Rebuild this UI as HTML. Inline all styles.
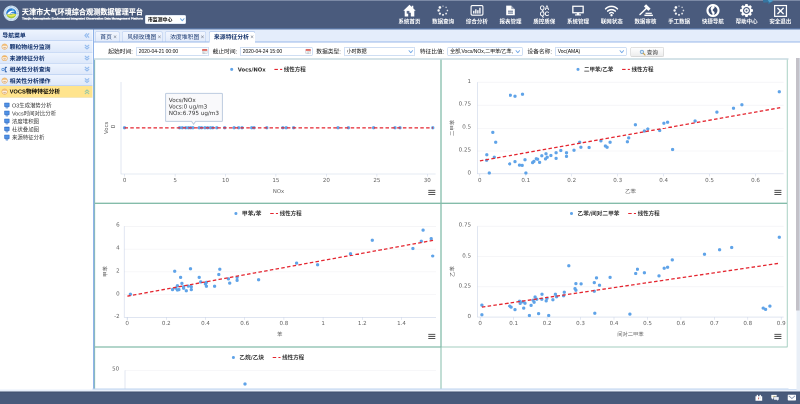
<!DOCTYPE html><html lang="zh-CN"><head><meta charset="utf-8"><title>天津市大气环境综合观测数据管理平台</title><style>
*{box-sizing:border-box;margin:0;padding:0}
html,body{width:800px;height:404px;overflow:hidden;background:#fff}
body{font-family:"Liberation Sans","Noto Sans CJK SC",sans-serif;}
#w{position:absolute;left:0;top:0;width:1600px;height:808px;transform:scale(.5);transform-origin:0 0;overflow:hidden;background:#fff;will-change:transform}
.a{position:absolute}
.t{position:absolute;white-space:nowrap;line-height:1}
#hd{left:0;top:0;width:1600px;height:58.8px;background:#4a5b7d;box-shadow:inset 0 2px 0 #7c8aa6, inset 0 -2.6px 0 #5d7bab}
.nl{position:absolute;top:37.2px;width:80px;margin-left:-40px;text-align:center;color:#fff;font-weight:bold;font-size:11.0px;line-height:12.0px;white-space:nowrap}
.ni{position:absolute;overflow:visible}
#sb{left:0;top:59.4px;width:185.2px;height:720.4px;background:#fff}
#sbb{left:185.7px;top:58.8px;width:3.1px;height:720.8px;background:#8fb2e8}
.ah{position:absolute;left:0;width:185.2px;height:22.6px;background:linear-gradient(#eef4fe,#dde8fa);border-bottom:1.2px solid #a9c3ee;color:#12316b;font-weight:bold;font-size:11.7px;line-height:23.0px;white-space:nowrap}
.ah.sel{background:#ffe48d;color:#000;border-bottom-color:#e8cf78}
.ah span{position:absolute;left:19.2px;top:0}
.tr{position:absolute;left:24.0px;font-size:10.8px;line-height:16.0px;color:#333;white-space:nowrap}
#tb{left:188.4px;top:58.8px;width:1412.0px;height:25.8px;background:#e4edfb;border-bottom:2.0px solid #98b7e8}
.tab{position:absolute;top:4.2px;height:19.8px;border:1.0px solid #b3c9ee;border-bottom:none;border-radius:3.0px 3.0px 0 0;background:linear-gradient(#f2f6fe,#e2ebfa);font-size:11.7px;line-height:20.2px;color:#12316b;white-space:nowrap;padding-left:9.2px}
.tab.on{background:#fff;height:21.8px;border-color:#98b7e8;font-weight:bold}
.tab i{font-style:normal;color:#6f7787;font-size:12.4px;margin-left:2.6px;font-weight:normal}
#fb{left:188.4px;top:84.6px;width:1412.0px;height:32.4px;background:#fff}
.fl{position:absolute;top:10.4px;font-size:11.5px;line-height:16.4px;color:#111;white-space:nowrap}
.fi{position:absolute;top:9.8px;height:17.6px;border:1.0px solid #9fbde6;border-radius:2.4px;background:#fff;font-size:10.0px;line-height:15.6px;color:#050505;padding-left:4.4px;white-space:nowrap;overflow:hidden}
.pn{position:absolute;border:2.0px solid #97c8ba;background:#fff}
#ft{left:0;top:783.2px;width:1600px;height:25.2px;background:#485a7b;box-shadow:inset 0 1.8px 0 #3b4b69}
svg text{font-family:"DejaVu Sans","Noto Sans CJK SC",sans-serif;}
</style></head><body><div id="w">
<div id="hd" class="a">
<svg class="a" style="left:6.8px;top:10.6px" width="31.2" height="31.2" viewBox="0 0 31.2 31.2">
<circle cx="15.6" cy="15.6" r="15.4" fill="#eef5fb"/>
<circle cx="15.6" cy="15.6" r="13.2" fill="none" stroke="#9cc4e6" stroke-width="3.2" stroke-dasharray="1.6 1.1"/>
<circle cx="15.6" cy="15.6" r="10.2" fill="#2a7bd0"/>
<path d="M5.6 17.5 A10.2 10.2 0 0 0 25.6 17.5 C21 14.5 16 20 5.6 17.5Z" fill="#a4c93a"/>
<path d="M6.2 18.6 C12 21.5 19 15 25.2 18.8 C20 23.5 12 23.5 6.2 18.6Z" fill="#e8e85a"/>
<path d="M8.5 15.5 C12 9.5 20 9 23 13 C19 11.8 14 13.5 12 17.2 C16 13.8 20.5 14.2 24.2 16.2 C18 14.2 13 19.5 7 17.2Z" fill="#fff"/>
<circle cx="18.6" cy="9.6" r="2.1" fill="#5fc0f0"/>
</svg>
<div class="t" style="left:43.8px;top:14.6px;font-size:14.26px;line-height:18.0px;font-weight:bold;color:#fff;-webkit-text-stroke:0.35px #fff;text-shadow:0 1px 1px rgba(30,40,70,.6)">天津市大气环境综合观测数据管理平台</div>
<div class="t" id="sub" style="left:44.0px;top:33.2px;font-size:6.0px;line-height:8.0px;font-weight:bold;color:#fff;-webkit-text-stroke:0.5px #fff">Tianjin Atmospheric Environment Integrated Observation Data Management Platform</div>
<div class="a" style="left:289.6px;top:30.4px;width:82.8px;height:17.6px;background:#fff;border-radius:2.6px;border:0.8px solid #c4d4ea"><div class="t" style="left:5.2px;top:3.2px;font-size:9.8px;line-height:10.8px;color:#000;font-weight:bold">市监测中心</div><svg class="a" style="left:69.2px;top:4.8px" width="9.2" height="7.2" viewBox="0 0 9.2 7.2"><path d="M1 1.4 L4.6 5.6 L8.2 1.4" fill="none" stroke="#6aa6e0" stroke-width="1.9" stroke-linecap="round" stroke-linejoin="round"/></svg></div>
<svg class="ni" style="left:805.8px;top:7.600000000000001px" width="26" height="26" viewBox="0 0 26 26"><path d="M13 0.6 L0.6 12.4 L3.4 12.4 L3.4 24 L10.4 24 L10.4 16.4 L15.6 16.4 L15.6 24 L22.6 24 L22.6 12.4 L25.4 12.4 L20.6 7.8 L20.6 2.6 L17.6 2.6 L17.6 5 Z" fill="#fff" transform="translate(0,1)"/><rect x="7.4" y="13.8" width="5.4" height="5.6" fill="#4a5b7d" opacity=".9"/></svg>
<div class="nl" style="left:818.8px">系统首页</div>
<svg class="ni" style="left:873.24px;top:7.600000000000001px" width="26" height="26" viewBox="0 0 26 26"><circle cx="13.00" cy="4.20" r="1.25" fill="#fff" opacity="0.72"/><circle cx="19.22" cy="6.78" r="1.45" fill="#fff" opacity="0.76"/><circle cx="21.80" cy="13.00" r="1.65" fill="#fff" opacity="0.80"/><circle cx="19.22" cy="19.22" r="1.85" fill="#fff" opacity="0.84"/><circle cx="13.00" cy="21.80" r="2.05" fill="#fff" opacity="0.88"/><circle cx="6.78" cy="19.22" r="2.25" fill="#fff" opacity="0.92"/><circle cx="4.20" cy="13.00" r="2.45" fill="#fff" opacity="0.96"/><circle cx="6.78" cy="6.78" r="2.65" fill="#fff" opacity="1.00"/></svg>
<div class="nl" style="left:886.24px">数据查询</div>
<svg class="ni" style="left:940.68px;top:7.600000000000001px" width="26" height="26" viewBox="0 0 26 26"><rect x="1.2" y="3.2" width="23.6" height="19.2" rx="2.6" fill="none" stroke="#fff" stroke-width="2.2"/><rect x="5.2" y="13.6" width="2.7" height="5.6" fill="#fff"/><rect x="9.3" y="10.6" width="2.7" height="8.6" fill="#fff"/><rect x="13.4" y="12.4" width="2.7" height="6.8" fill="#fff"/><rect x="17.5" y="7.6" width="2.7" height="11.6" fill="#fff"/></svg>
<div class="nl" style="left:953.68px">综合分析</div>
<svg class="ni" style="left:1008.12px;top:7.600000000000001px" width="26" height="26" viewBox="0 0 26 26"><path d="M4.4 3.2 L14.6 3.2 L21.6 10.2 L21.6 22.6 L4.4 22.6 Z" fill="#fff"/><path d="M14.6 3.2 L14.6 10.2 L21.6 10.2 Z" fill="#4a5b7d" opacity=".55"/><rect x="8" y="13.4" width="10" height="1.9" fill="#4a5b7d"/><rect x="8" y="17.2" width="10" height="1.9" fill="#4a5b7d"/></svg>
<div class="nl" style="left:1021.12px">报表管理</div>
<svg class="ni" style="left:1075.56px;top:7.600000000000001px" width="26" height="26" viewBox="0 0 26 26"><text x="13" y="12.4" font-size="12.8" font-weight="bold" fill="#fff" text-anchor="middle" style="font-family:'Liberation Sans',sans-serif">QA</text><text x="13" y="23.6" font-size="12.8" font-weight="bold" fill="#fff" text-anchor="middle" style="font-family:'Liberation Sans',sans-serif">QC</text></svg>
<div class="nl" style="left:1088.56px">质控质保</div>
<svg class="ni" style="left:1143.0px;top:7.600000000000001px" width="26" height="26" viewBox="0 0 26 26"><path d="M1.4 3.2 L24.6 3.2 L24.6 18.8 L15.4 18.8 L15.4 20.8 L19 20.8 L19 23 L7 23 L7 20.8 L10.6 20.8 L10.6 18.8 L1.4 18.8 Z M4 5.8 L4 16.2 L22 16.2 L22 5.8 Z" fill="#fff" fill-rule="evenodd"/></svg>
<div class="nl" style="left:1156.0px">系统管理</div>
<svg class="ni" style="left:1210.44px;top:7.600000000000001px" width="26" height="26" viewBox="0 0 26 26"><path d="M1.2 9.6 A17 17 0 0 1 24.8 9.6" fill="none" stroke="#fff" stroke-width="3" stroke-linecap="round"/><path d="M5.4 14.2 A11 11 0 0 1 20.6 14.2" fill="none" stroke="#fff" stroke-width="3" stroke-linecap="round"/><path d="M9.4 18.4 A5.4 5.4 0 0 1 16.6 18.4" fill="none" stroke="#fff" stroke-width="2.8" stroke-linecap="round"/><circle cx="13" cy="22.4" r="2.3" fill="#fff"/></svg>
<div class="nl" style="left:1223.44px">联网状态</div>
<svg class="ni" style="left:1277.88px;top:7.600000000000001px" width="26" height="26" viewBox="0 0 26 26"><path d="M2 21 L15.8 7.6" stroke="#fff" stroke-width="2.9" stroke-linecap="round"/><path d="M12 2.6 L21 11.6" stroke="#fff" stroke-width="6.2" stroke-linecap="butt"/><rect x="13" y="17.4" width="12.6" height="2.5" fill="#fff"/><rect x="10.8" y="21.2" width="17" height="2.9" fill="#fff"/></svg>
<div class="nl" style="left:1290.88px">数据审核</div>
<svg class="ni" style="left:1345.32px;top:7.600000000000001px" width="26" height="26" viewBox="0 0 26 26"><circle cx="13.00" cy="4.20" r="1.25" fill="#fff" opacity="0.72"/><circle cx="19.22" cy="6.78" r="1.45" fill="#fff" opacity="0.76"/><circle cx="21.80" cy="13.00" r="1.65" fill="#fff" opacity="0.80"/><circle cx="19.22" cy="19.22" r="1.85" fill="#fff" opacity="0.84"/><circle cx="13.00" cy="21.80" r="2.05" fill="#fff" opacity="0.88"/><circle cx="6.78" cy="19.22" r="2.25" fill="#fff" opacity="0.92"/><circle cx="4.20" cy="13.00" r="2.45" fill="#fff" opacity="0.96"/><circle cx="6.78" cy="6.78" r="2.65" fill="#fff" opacity="1.00"/></svg>
<div class="nl" style="left:1358.32px">手工数据</div>
<svg class="ni" style="left:1412.76px;top:7.600000000000001px" width="26" height="26" viewBox="0 0 26 26"><circle cx="13" cy="13" r="13.1" fill="#fff"/><circle cx="13" cy="13" r="8.9" fill="#3f4f72"/><path d="M12.4 3.4 C15.6 3.2 17.4 5.4 15.6 8 C14 10.2 12 10.6 12.6 12.8 C13.2 14.8 16 14.8 16.2 17.6 C16.4 20.2 14.4 22.4 11.6 22.8 C12.6 20 11.6 18.8 10.4 17 C9.2 15.2 10.2 13.8 9 12 C7.6 10 8.6 7 10.2 5.6 Z" fill="#fff"/></svg>
<div class="nl" style="left:1425.76px">快捷导航</div>
<svg class="ni" style="left:1480.2px;top:7.600000000000001px" width="26" height="26" viewBox="0 0 26 26"><polygon points="22.74,9.99 25.91,10.78 25.91,15.22 22.74,16.01 22.02,17.76 23.70,20.56 20.56,23.70 17.76,22.02 16.01,22.74 15.22,25.91 10.78,25.91 9.99,22.74 8.24,22.02 5.44,23.70 2.30,20.56 3.98,17.76 3.26,16.01 0.09,15.22 0.09,10.78 3.26,9.99 3.98,8.24 2.30,5.44 5.44,2.30 8.24,3.98 9.99,3.26 10.78,0.09 15.22,0.09 16.01,3.26 17.76,3.98 20.56,2.30 23.70,5.44 22.02,8.24" fill="#fff"/><circle cx="13" cy="13" r="7" fill="#4a5b7d"/><circle cx="13" cy="13" r="4.7" fill="#fff"/><circle cx="13" cy="13" r="2.1" fill="#4a5b7d"/></svg>
<div class="nl" style="left:1493.2px">帮助中心</div>
<svg class="ni" style="left:1547.64px;top:7.600000000000001px" width="26" height="26" viewBox="0 0 26 26"><rect x="1.3" y="3.1" width="23.6" height="21.6" fill="none" stroke="#fff" stroke-width="2.4"/><path d="M7.9 8.7 L18.3 19.1 M18.3 8.7 L7.9 19.1" stroke="#fff" stroke-width="2.7" stroke-linecap="square"/></svg>
<div class="nl" style="left:1560.64px">安全退出</div>
<svg class="a" style="left:1525.0px;top:-2px" width="22.0" height="10.8" viewBox="0 0 22 10.8"><path d="M0 0 L13 0 L22 3.4 L12 10.8 L11.2 6.6 L2 7.6 Z" fill="#36749f"/><path d="M9 0 L13 0 L22 3.4 L14 7 Z" fill="#4f9fcd"/></svg>
</div>
<div id="sb" class="a">
<div class="ah" style="top:0"><span style="left:4.8px">导航菜单</span><svg class="a" style="left:168.4px;top:6.4px" width="11.0" height="10.0" viewBox="0 0 11 10"><path d="M5 1.4 L1.8 5 L5 8.6 M9.4 1.4 L6.2 5 L9.4 8.6" fill="none" stroke="#94bbee" stroke-width="2.3" stroke-linecap="round" stroke-linejoin="round"/></svg></div>
<div class="ah" style="top:22.8px"><svg class="a" style="left:3.4px;top:5.0px" width="12.4" height="12.4" viewBox="0 0 12 12"><circle cx="6" cy="6" r="5.3" fill="#fbeedd" stroke="#e8a95a" stroke-width="1.15"/><path d="M1.2 5 A5 5 0 0 1 10.8 5 L9 4.2 L3 4.2 Z" fill="#f0b562"/><path d="M3.6 7.4 H8.4" stroke="#b98a5e" stroke-width="1.1"/><path d="M4.4 9.3 H7.6" stroke="#d9b48e" stroke-width="0.9"/></svg><span>颗粒物组分监测</span><svg class="a" style="left:168.8px;top:6.4px" width="10.0" height="11.0" viewBox="0 0 10 11"><path d="M1.4 1.4 L5 4.6 L8.6 1.4 M1.4 5.8 L5 9 L8.6 5.8" fill="none" stroke="#94bbee" stroke-width="2.3" stroke-linecap="round" stroke-linejoin="round"/></svg></div>
<div class="ah" style="top:45.4px"><svg class="a" style="left:3.4px;top:5.0px" width="12.4" height="12.4" viewBox="0 0 12 12"><circle cx="6" cy="6" r="5.3" fill="#fbeedd" stroke="#e8a95a" stroke-width="1.15"/><path d="M1.2 5 A5 5 0 0 1 10.8 5 L9 4.2 L3 4.2 Z" fill="#f0b562"/><path d="M3.6 7.4 H8.4" stroke="#b98a5e" stroke-width="1.1"/><path d="M4.4 9.3 H7.6" stroke="#d9b48e" stroke-width="0.9"/></svg><span>来源特征分析</span><svg class="a" style="left:168.8px;top:6.4px" width="10.0" height="11.0" viewBox="0 0 10 11"><path d="M1.4 1.4 L5 4.6 L8.6 1.4 M1.4 5.8 L5 9 L8.6 5.8" fill="none" stroke="#94bbee" stroke-width="2.3" stroke-linecap="round" stroke-linejoin="round"/></svg></div>
<div class="ah" style="top:67.6px"><svg class="a" style="left:3.4px;top:5.6px" width="12.0" height="12.0" viewBox="0 0 12 12"><circle cx="3" cy="6" r="2.4" fill="#eaf3fd" stroke="#4f8ad6" stroke-width="1.5"/><path d="M11 1.6 L7.6 1.6 L7.6 10.6 L11 10.6" fill="none" stroke="#2f5fa8" stroke-width="1.8"/><path d="M5.4 6 L7.6 6" stroke="#4f8ad6" stroke-width="1.2"/></svg><span>相关性分析查询</span><svg class="a" style="left:168.8px;top:6.4px" width="10.0" height="11.0" viewBox="0 0 10 11"><path d="M1.4 1.4 L5 4.6 L8.6 1.4 M1.4 5.8 L5 9 L8.6 5.8" fill="none" stroke="#94bbee" stroke-width="2.3" stroke-linecap="round" stroke-linejoin="round"/></svg></div>
<div class="ah" style="top:90.2px"><svg class="a" style="left:3.4px;top:5.0px" width="12.4" height="12.4" viewBox="0 0 12 12"><circle cx="6" cy="6" r="5.3" fill="#fbeedd" stroke="#e8a95a" stroke-width="1.15"/><path d="M1.2 5 A5 5 0 0 1 10.8 5 L9 4.2 L3 4.2 Z" fill="#f0b562"/><path d="M3.6 7.4 H8.4" stroke="#b98a5e" stroke-width="1.1"/><path d="M4.4 9.3 H7.6" stroke="#d9b48e" stroke-width="0.9"/></svg><span>相关性分析操作</span><svg class="a" style="left:168.8px;top:6.4px" width="10.0" height="11.0" viewBox="0 0 10 11"><path d="M1.4 1.4 L5 4.6 L8.6 1.4 M1.4 5.8 L5 9 L8.6 5.8" fill="none" stroke="#94bbee" stroke-width="2.3" stroke-linecap="round" stroke-linejoin="round"/></svg></div>
<div class="ah sel" style="top:112.8px"><svg class="a" style="left:3.4px;top:5.0px" width="12.4" height="12.4" viewBox="0 0 12 12"><circle cx="6" cy="6" r="5.3" fill="#fbeedd" stroke="#e8a95a" stroke-width="1.15"/><path d="M1.2 5 A5 5 0 0 1 10.8 5 L9 4.2 L3 4.2 Z" fill="#f0b562"/><path d="M3.6 7.4 H8.4" stroke="#b98a5e" stroke-width="1.1"/><path d="M4.4 9.3 H7.6" stroke="#d9b48e" stroke-width="0.9"/></svg><span style="font-size:11.44px">VOCS物种特征分析</span><svg class="a" style="left:168.8px;top:6.0px" width="10.0" height="11.0" viewBox="0 0 10 11"><path d="M1.4 5 L5 1.8 L8.6 5 M1.4 9.4 L5 6.2 L8.6 9.4" fill="none" stroke="#9cc8a4" stroke-width="2.1" stroke-linecap="round" stroke-linejoin="round"/></svg></div>
<svg class="a" style="left:8.4px;top:145.4px" width="11.6" height="12.4" viewBox="0 0 11.6 12.4"><rect x="0.6" y="0.4" width="10.4" height="8.4" rx="0.8" fill="#2f6cc6"/><rect x="1.9" y="1.7" width="7.8" height="5.2" fill="#4f92e6"/><path d="M2.4 8.8 L9.2 8.8 L7.8 12.2 L3.8 12.2 Z" fill="#7fa9e2"/></svg>
<div class="tr" style="top:143.6px">O3生成潜势分析</div>
<svg class="a" style="left:8.4px;top:161.6px" width="11.6" height="12.4" viewBox="0 0 11.6 12.4"><rect x="0.6" y="0.4" width="10.4" height="8.4" rx="0.8" fill="#2f6cc6"/><rect x="1.9" y="1.7" width="7.8" height="5.2" fill="#4f92e6"/><path d="M2.4 8.8 L9.2 8.8 L7.8 12.2 L3.8 12.2 Z" fill="#7fa9e2"/></svg>
<div class="tr" style="top:159.8px">Vocs时间对比分析</div>
<svg class="a" style="left:8.4px;top:177.4px" width="11.6" height="12.4" viewBox="0 0 11.6 12.4"><rect x="0.6" y="0.4" width="10.4" height="8.4" rx="0.8" fill="#2f6cc6"/><rect x="1.9" y="1.7" width="7.8" height="5.2" fill="#4f92e6"/><path d="M2.4 8.8 L9.2 8.8 L7.8 12.2 L3.8 12.2 Z" fill="#7fa9e2"/></svg>
<div class="tr" style="top:175.6px">浓度堆积图</div>
<svg class="a" style="left:8.4px;top:193.6px" width="11.6" height="12.4" viewBox="0 0 11.6 12.4"><rect x="0.6" y="0.4" width="10.4" height="8.4" rx="0.8" fill="#2f6cc6"/><rect x="1.9" y="1.7" width="7.8" height="5.2" fill="#4f92e6"/><path d="M2.4 8.8 L9.2 8.8 L7.8 12.2 L3.8 12.2 Z" fill="#7fa9e2"/></svg>
<div class="tr" style="top:191.8px">柱状叠加图</div>
<svg class="a" style="left:8.4px;top:209.8px" width="11.6" height="12.4" viewBox="0 0 11.6 12.4"><rect x="0.6" y="0.4" width="10.4" height="8.4" rx="0.8" fill="#2f6cc6"/><rect x="1.9" y="1.7" width="7.8" height="5.2" fill="#4f92e6"/><path d="M2.4 8.8 L9.2 8.8 L7.8 12.2 L3.8 12.2 Z" fill="#7fa9e2"/></svg>
<div class="tr" style="top:208.0px">来源特征分析</div>
</div><div id="sbb" class="a"></div>
<div id="tb" class="a">
<div class="tab" style="left:2.0px;width:48.8px">首页<i>×</i></div>
<div class="tab" style="left:55.6px;width:81.2px">风频玫瑰图<i>×</i></div>
<div class="tab" style="left:141.6px;width:82.0px">浓度堆积图<i>×</i></div>
<div class="tab on" style="left:229.2px;width:92.4px">来源特征分析<i>×</i></div>
</div>
<div id="fb" class="a">
<div class="fl" style="left:28.0px">起始时间:</div>
<div class="fi" style="left:83.6px;width:146.4px">2020-04-21 00:00<svg class="a" style="right:2.4px;top:1.8px" width="10.8" height="11.2" viewBox="0 0 10.8 11.2"><rect x="0.5" y="1.4" width="9.8" height="9.2" rx="1" fill="#fff" stroke="#b9b9c4" stroke-width="1"/><rect x="0.5" y="1.4" width="9.8" height="3.2" fill="#e2574c"/><rect x="2.4" y="6" width="1.6" height="1.4" fill="#9aa"/><rect x="4.8" y="6" width="1.6" height="1.4" fill="#9aa"/><rect x="7.2" y="6" width="1.6" height="1.4" fill="#9aa"/><rect x="2.4" y="8.2" width="1.6" height="1.4" fill="#9aa"/><rect x="4.8" y="8.2" width="1.6" height="1.4" fill="#9aa"/></svg></div>
<div class="fl" style="left:236.8px">截止时间:</div>
<div class="fi" style="left:291.6px;width:145.2px">2020-04-24 15:00<svg class="a" style="right:2.4px;top:1.8px" width="10.8" height="11.2" viewBox="0 0 10.8 11.2"><rect x="0.5" y="1.4" width="9.8" height="9.2" rx="1" fill="#fff" stroke="#b9b9c4" stroke-width="1"/><rect x="0.5" y="1.4" width="9.8" height="3.2" fill="#e2574c"/><rect x="2.4" y="6" width="1.6" height="1.4" fill="#9aa"/><rect x="4.8" y="6" width="1.6" height="1.4" fill="#9aa"/><rect x="7.2" y="6" width="1.6" height="1.4" fill="#9aa"/><rect x="2.4" y="8.2" width="1.6" height="1.4" fill="#9aa"/><rect x="4.8" y="8.2" width="1.6" height="1.4" fill="#9aa"/></svg></div>
<div class="fl" style="left:444.0px">数据类型:</div>
<div class="fi" style="left:499.6px;width:142.4px">小时数据<svg class="a" style="right:3.6px;top:4.4px" width="9.2" height="6.8" viewBox="0 0 9.2 6.8"><path d="M1 1.2 L4.6 5.4 L8.2 1.2" fill="none" stroke="#6aa2e4" stroke-width="1.7" stroke-linecap="round" stroke-linejoin="round"/></svg></div>
<div class="fl" style="left:651.2px">特征比值:</div>
<div class="fi" style="left:706.4px;width:150.4px">全部,Vocs/NOx,二甲苯/乙苯,<svg class="a" style="right:3.6px;top:4.4px" width="9.2" height="6.8" viewBox="0 0 9.2 6.8"><path d="M1 1.2 L4.6 5.4 L8.2 1.2" fill="none" stroke="#6aa2e4" stroke-width="1.7" stroke-linecap="round" stroke-linejoin="round"/></svg></div>
<div class="fl" style="left:866.4px">设备名称:</div>
<div class="fi" style="left:921.6px;width:142.8px">Voc(AMA)<svg class="a" style="right:3.6px;top:4.4px" width="9.2" height="6.8" viewBox="0 0 9.2 6.8"><path d="M1 1.2 L4.6 5.4 L8.2 1.2" fill="none" stroke="#6aa2e4" stroke-width="1.7" stroke-linecap="round" stroke-linejoin="round"/></svg></div>
<div class="a" style="left:1072.8px;top:9.4px;width:67.2px;height:20.4px;border:1.0px solid #c4c4c4;border-radius:3.2px;background:linear-gradient(#fff,#ececec)"><svg class="a" style="left:16.4px;top:3.8px" width="12.0" height="12.0" viewBox="0 0 12 12"><circle cx="4.8" cy="4.8" r="3.4" fill="#cfe6fa" stroke="#6c9fd2" stroke-width="1.5"/><path d="M7.4 7.4 L11 11" stroke="#c9a24a" stroke-width="2.2" stroke-linecap="round"/></svg><div class="t" style="left:31.2px;top:4.0px;font-size:11.2px;line-height:12.4px;color:#333">查询</div></div>
</div>
<div class="a" style="left:188.4px;top:116.2px;width:1388.4px;height:3.4px;background:#d5e3e8"></div>
<svg class="a" style="left:0;top:0" width="1600" height="778.4" viewBox="0 0 800 389.2"><path d="M441 59.6 V347" stroke="#84bcaa" stroke-width="1.3" fill="none"/><path d="M441 347 V389.2" stroke="#84bcaa" stroke-width="1.0" fill="none"/><path d="M787.2 59.6 V347" stroke="#84bcaa" stroke-width="0.7" fill="none"/><path d="M94.75 59.6 V389.2" stroke="#84bcaa" stroke-width="0.75" fill="none"/><path d="M95 203.3 H787.5" stroke="#84bcaa" stroke-width="1.3" fill="none"/><path d="M95 347 H441" stroke="#84bcaa" stroke-width="1.3" fill="none"/><path d="M441 347 H787.5" stroke="#84bcaa" stroke-width="0.7" fill="none"/><circle cx="231.7" cy="69.4" r="1.5" fill="#5fa3e8"/><text x="237.7" y="71.4" font-size="5.5" font-weight="bold" fill="#333" textLength="28" lengthAdjust="spacingAndGlyphs">Vocs/NOx</text><path d="M274.4 69.4 h3.5 M280.1 69.4 h2.1" stroke="#e4252f" stroke-width="1.1"/><text x="283.8" y="71.4" font-size="5.5" font-weight="bold" fill="#333" textLength="22" lengthAdjust="spacingAndGlyphs">线性方程</text><path d="M121 82 V174 H435.6" fill="none" stroke="#ccd5e8" stroke-width="0.6"/><path d="M124.6 174 v2.6" stroke="#ccd5e8" stroke-width="0.55"/><path d="M175.1 174 v2.6" stroke="#ccd5e8" stroke-width="0.55"/><path d="M225.5 174 v2.6" stroke="#ccd5e8" stroke-width="0.55"/><path d="M275.9 174 v2.6" stroke="#ccd5e8" stroke-width="0.55"/><path d="M326.4 174 v2.6" stroke="#ccd5e8" stroke-width="0.55"/><path d="M376.9 174 v2.6" stroke="#ccd5e8" stroke-width="0.55"/><path d="M427.3 174 v2.6" stroke="#ccd5e8" stroke-width="0.55"/><text x="124.6" y="181.9" font-size="5.55" fill="#5f5f5f" text-anchor="middle">0</text><text x="175.1" y="181.9" font-size="5.55" fill="#5f5f5f" text-anchor="middle">5</text><text x="225.5" y="181.9" font-size="5.55" fill="#5f5f5f" text-anchor="middle">10</text><text x="275.9" y="181.9" font-size="5.55" fill="#5f5f5f" text-anchor="middle">15</text><text x="326.4" y="181.9" font-size="5.55" fill="#5f5f5f" text-anchor="middle">20</text><text x="376.9" y="181.9" font-size="5.55" fill="#5f5f5f" text-anchor="middle">25</text><text x="427.3" y="181.9" font-size="5.55" fill="#5f5f5f" text-anchor="middle">30</text><text transform="translate(115.2,126.3) rotate(-90)" font-size="5.55" fill="#5f5f5f" text-anchor="middle">0</text><text transform="translate(108,127.8) rotate(-90)" font-size="5.4" fill="#5f5f5f" text-anchor="middle">Vocs</text><text x="278.5" y="192.9" font-size="5.3" fill="#5f5f5f" text-anchor="middle">NOx</text><path d="M428.3 190.4 h7 M428.3 192.45000000000002 h7 M428.3 194.5 h7" stroke="#555" stroke-width="1.05"/><circle cx="124.5" cy="127.8" r="1.62" fill="#5fa3e8"/><circle cx="179.6" cy="127.8" r="1.62" fill="#5fa3e8"/><circle cx="182.3" cy="127.8" r="1.62" fill="#5fa3e8"/><circle cx="185.7" cy="127.8" r="1.62" fill="#5fa3e8"/><circle cx="188.4" cy="127.8" r="1.62" fill="#5fa3e8"/><circle cx="190.7" cy="127.8" r="1.62" fill="#5fa3e8"/><circle cx="192.9" cy="127.8" r="1.62" fill="#5fa3e8"/><circle cx="199.2" cy="127.8" r="1.62" fill="#5fa3e8"/><circle cx="201.5" cy="127.8" r="1.62" fill="#5fa3e8"/><circle cx="204.9" cy="127.8" r="1.62" fill="#5fa3e8"/><circle cx="207.6" cy="127.8" r="1.62" fill="#5fa3e8"/><circle cx="210.5" cy="127.8" r="1.62" fill="#5fa3e8"/><circle cx="212.7" cy="127.8" r="1.62" fill="#5fa3e8"/><circle cx="216.8" cy="127.8" r="1.62" fill="#5fa3e8"/><circle cx="224.7" cy="127.8" r="1.62" fill="#5fa3e8"/><circle cx="234.1" cy="127.8" r="1.62" fill="#5fa3e8"/><circle cx="238.6" cy="127.8" r="1.62" fill="#5fa3e8"/><circle cx="242.0" cy="127.8" r="1.62" fill="#5fa3e8"/><circle cx="251.7" cy="127.8" r="1.62" fill="#5fa3e8"/><circle cx="254.0" cy="127.8" r="1.62" fill="#5fa3e8"/><circle cx="266.8" cy="127.8" r="1.62" fill="#5fa3e8"/><circle cx="282.8" cy="127.8" r="1.62" fill="#5fa3e8"/><circle cx="286.2" cy="127.8" r="1.62" fill="#5fa3e8"/><circle cx="293.6" cy="127.8" r="1.62" fill="#5fa3e8"/><circle cx="338.0" cy="127.8" r="1.62" fill="#5fa3e8"/><circle cx="348.4" cy="127.8" r="1.62" fill="#5fa3e8"/><circle cx="373.6" cy="127.8" r="1.62" fill="#5fa3e8"/><circle cx="395.0" cy="127.8" r="1.62" fill="#5fa3e8"/><circle cx="400.0" cy="127.8" r="1.62" fill="#5fa3e8"/><circle cx="432.8" cy="127.8" r="1.62" fill="#5fa3e8"/><path d="M124.5 127.8 L433 127.8" stroke="#e4252f" stroke-width="1.3" stroke-dasharray="3.5 2.3" fill="none"/><path d="M166.4 93.4 H221.6 Q222.4 93.4 222.4 94.2 V120.6 Q222.4 121.4 221.6 121.4 H195.6 L193.6 124.3 L191.6 121.4 H166.4 Q165.6 121.4 165.6 120.6 V94.2 Q165.6 93.4 166.4 93.4 Z" fill="#f8f9fb" fill-opacity=".92" stroke="#bccbdf" stroke-width="1"/><text x="168.8" y="102.2" font-size="5.68" fill="#333">Vocs/NOx</text><text x="168.8" y="108.5" font-size="5.68" fill="#333">Vocs:0 ug/m3</text><text x="168.8" y="114.8" font-size="5.68" fill="#333">NOx:6.795 ug/m3</text><circle cx="578.0" cy="69.4" r="1.5" fill="#5fa3e8"/><text x="584.0" y="71.4" font-size="5.5" font-weight="bold" fill="#333" textLength="29.4" lengthAdjust="spacingAndGlyphs">二甲苯/乙苯</text><path d="M622.1 69.4 h3.5 M627.8 69.4 h2.1" stroke="#e4252f" stroke-width="1.1"/><text x="631.5" y="71.4" font-size="5.5" font-weight="bold" fill="#333" textLength="22" lengthAdjust="spacingAndGlyphs">线性方程</text><path d="M477.4 82.2 H783.6" stroke="#eeeef2" stroke-width="0.55"/><path d="M477.4 105.2 H783.6" stroke="#eeeef2" stroke-width="0.55"/><path d="M477.4 128.2 H783.6" stroke="#eeeef2" stroke-width="0.55"/><path d="M477.4 151 H783.6" stroke="#eeeef2" stroke-width="0.55"/><path d="M477.4 82.2 V173.8 H783.6" fill="none" stroke="#ccd5e8" stroke-width="0.6"/><path d="M479.8 173.8 v2.6" stroke="#ccd5e8" stroke-width="0.55"/><path d="M525.8 173.8 v2.6" stroke="#ccd5e8" stroke-width="0.55"/><path d="M571.7 173.8 v2.6" stroke="#ccd5e8" stroke-width="0.55"/><path d="M617.7 173.8 v2.6" stroke="#ccd5e8" stroke-width="0.55"/><path d="M663.6 173.8 v2.6" stroke="#ccd5e8" stroke-width="0.55"/><path d="M709.5 173.8 v2.6" stroke="#ccd5e8" stroke-width="0.55"/><path d="M755.5 173.8 v2.6" stroke="#ccd5e8" stroke-width="0.55"/><text x="479.8" y="181.9" font-size="5.55" fill="#5f5f5f" text-anchor="middle">0</text><text x="525.8" y="181.9" font-size="5.55" fill="#5f5f5f" text-anchor="middle">0.1</text><text x="571.7" y="181.9" font-size="5.55" fill="#5f5f5f" text-anchor="middle">0.2</text><text x="617.7" y="181.9" font-size="5.55" fill="#5f5f5f" text-anchor="middle">0.3</text><text x="663.6" y="181.9" font-size="5.55" fill="#5f5f5f" text-anchor="middle">0.4</text><text x="709.5" y="181.9" font-size="5.55" fill="#5f5f5f" text-anchor="middle">0.5</text><text x="755.5" y="181.9" font-size="5.55" fill="#5f5f5f" text-anchor="middle">0.6</text><text x="471" y="82.9" font-size="5.55" fill="#5f5f5f" text-anchor="end">1</text><text x="471" y="105.5" font-size="5.55" fill="#5f5f5f" text-anchor="end">0.75</text><text x="471" y="128.7" font-size="5.55" fill="#5f5f5f" text-anchor="end">0.5</text><text x="471" y="151.5" font-size="5.55" fill="#5f5f5f" text-anchor="end">0.25</text><text x="471" y="174.5" font-size="5.55" fill="#5f5f5f" text-anchor="end">0</text><text transform="translate(454.2,128) rotate(-90)" font-size="5.4" fill="#5f5f5f" text-anchor="middle">二甲苯</text><text x="630.4" y="192.9" font-size="5.3" fill="#5f5f5f" text-anchor="middle">乙苯</text><path d="M774.4 190.4 h7 M774.4 192.45000000000002 h7 M774.4 194.5 h7" stroke="#555" stroke-width="1.05"/><circle cx="510.3" cy="95.3" r="1.62" fill="#5fa3e8"/><circle cx="515.0" cy="96.3" r="1.62" fill="#5fa3e8"/><circle cx="522.5" cy="94.3" r="1.62" fill="#5fa3e8"/><circle cx="492.8" cy="132.4" r="1.62" fill="#5fa3e8"/><circle cx="495.7" cy="142.3" r="1.62" fill="#5fa3e8"/><circle cx="486.8" cy="154.7" r="1.62" fill="#5fa3e8"/><circle cx="486.6" cy="160.2" r="1.62" fill="#5fa3e8"/><circle cx="494.3" cy="157.2" r="1.62" fill="#5fa3e8"/><circle cx="489.3" cy="173.0" r="1.62" fill="#5fa3e8"/><circle cx="509.6" cy="163.9" r="1.62" fill="#5fa3e8"/><circle cx="515.0" cy="161.6" r="1.62" fill="#5fa3e8"/><circle cx="519.5" cy="165.1" r="1.62" fill="#5fa3e8"/><circle cx="522.2" cy="165.4" r="1.62" fill="#5fa3e8"/><circle cx="525.0" cy="159.7" r="1.62" fill="#5fa3e8"/><circle cx="525.9" cy="173.0" r="1.62" fill="#5fa3e8"/><circle cx="532.6" cy="162.6" r="1.62" fill="#5fa3e8"/><circle cx="533.9" cy="161.4" r="1.62" fill="#5fa3e8"/><circle cx="536.3" cy="158.7" r="1.62" fill="#5fa3e8"/><circle cx="537.6" cy="159.2" r="1.62" fill="#5fa3e8"/><circle cx="539.6" cy="162.4" r="1.62" fill="#5fa3e8"/><circle cx="541.8" cy="155.7" r="1.62" fill="#5fa3e8"/><circle cx="545.5" cy="158.9" r="1.62" fill="#5fa3e8"/><circle cx="546.0" cy="153.7" r="1.62" fill="#5fa3e8"/><circle cx="547.2" cy="157.2" r="1.62" fill="#5fa3e8"/><circle cx="550.9" cy="155.5" r="1.62" fill="#5fa3e8"/><circle cx="556.1" cy="152.7" r="1.62" fill="#5fa3e8"/><circle cx="556.1" cy="158.4" r="1.62" fill="#5fa3e8"/><circle cx="560.8" cy="150.5" r="1.62" fill="#5fa3e8"/><circle cx="566.5" cy="152.7" r="1.62" fill="#5fa3e8"/><circle cx="566.5" cy="156.4" r="1.62" fill="#5fa3e8"/><circle cx="574.0" cy="150.3" r="1.62" fill="#5fa3e8"/><circle cx="579.7" cy="142.3" r="1.62" fill="#5fa3e8"/><circle cx="580.9" cy="147.3" r="1.62" fill="#5fa3e8"/><circle cx="589.1" cy="147.5" r="1.62" fill="#5fa3e8"/><circle cx="600.9" cy="140.9" r="1.62" fill="#5fa3e8"/><circle cx="605.4" cy="146.0" r="1.62" fill="#5fa3e8"/><circle cx="607.1" cy="147.3" r="1.62" fill="#5fa3e8"/><circle cx="610.1" cy="142.3" r="1.62" fill="#5fa3e8"/><circle cx="627.4" cy="141.8" r="1.62" fill="#5fa3e8"/><circle cx="628.7" cy="137.9" r="1.62" fill="#5fa3e8"/><circle cx="635.4" cy="124.8" r="1.62" fill="#5fa3e8"/><circle cx="644.4" cy="131.0" r="1.62" fill="#5fa3e8"/><circle cx="647.8" cy="128.7" r="1.62" fill="#5fa3e8"/><circle cx="659.7" cy="130.5" r="1.62" fill="#5fa3e8"/><circle cx="663.9" cy="123.3" r="1.62" fill="#5fa3e8"/><circle cx="667.6" cy="122.3" r="1.62" fill="#5fa3e8"/><circle cx="672.6" cy="149.5" r="1.62" fill="#5fa3e8"/><circle cx="695.1" cy="121.0" r="1.62" fill="#5fa3e8"/><circle cx="716.9" cy="112.1" r="1.62" fill="#5fa3e8"/><circle cx="733.5" cy="108.2" r="1.62" fill="#5fa3e8"/><circle cx="741.9" cy="104.7" r="1.62" fill="#5fa3e8"/><circle cx="779.3" cy="91.8" r="1.62" fill="#5fa3e8"/><path d="M479.9 160.9 L780.2 107.7" stroke="#e4252f" stroke-width="1.3" stroke-dasharray="3.5 2.3" fill="none"/><circle cx="235.9" cy="213.5" r="1.5" fill="#5fa3e8"/><text x="241.9" y="215.5" font-size="5.5" font-weight="bold" fill="#333" textLength="19.6" lengthAdjust="spacingAndGlyphs">甲苯/苯</text><path d="M270.2 213.5 h3.5 M275.9 213.5 h2.1" stroke="#e4252f" stroke-width="1.1"/><text x="279.6" y="215.5" font-size="5.5" font-weight="bold" fill="#333" textLength="22" lengthAdjust="spacingAndGlyphs">线性方程</text><path d="M124.2 226.3 H436" stroke="#eeeef2" stroke-width="0.55"/><path d="M124.2 249.1 H436" stroke="#eeeef2" stroke-width="0.55"/><path d="M124.2 271.9 H436" stroke="#eeeef2" stroke-width="0.55"/><path d="M124.2 294.6 H436" stroke="#eeeef2" stroke-width="0.55"/><path d="M124.2 226.3 V317.3 H436" fill="none" stroke="#ccd5e8" stroke-width="0.6"/><path d="M127.1 317.3 v2.6" stroke="#ccd5e8" stroke-width="0.55"/><path d="M166.3 317.3 v2.6" stroke="#ccd5e8" stroke-width="0.55"/><path d="M205.5 317.3 v2.6" stroke="#ccd5e8" stroke-width="0.55"/><path d="M244.7 317.3 v2.6" stroke="#ccd5e8" stroke-width="0.55"/><path d="M283.9 317.3 v2.6" stroke="#ccd5e8" stroke-width="0.55"/><path d="M323.1 317.3 v2.6" stroke="#ccd5e8" stroke-width="0.55"/><path d="M362.3 317.3 v2.6" stroke="#ccd5e8" stroke-width="0.55"/><path d="M401.5 317.3 v2.6" stroke="#ccd5e8" stroke-width="0.55"/><text x="127.1" y="325.1" font-size="5.55" fill="#5f5f5f" text-anchor="middle">0</text><text x="166.3" y="325.1" font-size="5.55" fill="#5f5f5f" text-anchor="middle">0.2</text><text x="205.5" y="325.1" font-size="5.55" fill="#5f5f5f" text-anchor="middle">0.4</text><text x="244.7" y="325.1" font-size="5.55" fill="#5f5f5f" text-anchor="middle">0.6</text><text x="283.9" y="325.1" font-size="5.55" fill="#5f5f5f" text-anchor="middle">0.8</text><text x="323.1" y="325.1" font-size="5.55" fill="#5f5f5f" text-anchor="middle">1</text><text x="362.3" y="325.1" font-size="5.55" fill="#5f5f5f" text-anchor="middle">1.2</text><text x="401.5" y="325.1" font-size="5.55" fill="#5f5f5f" text-anchor="middle">1.4</text><text x="119.6" y="226.5" font-size="5.55" fill="#5f5f5f" text-anchor="end">6</text><text x="119.6" y="249.5" font-size="5.55" fill="#5f5f5f" text-anchor="end">4</text><text x="119.6" y="272.5" font-size="5.55" fill="#5f5f5f" text-anchor="end">2</text><text x="119.6" y="295.4" font-size="5.55" fill="#5f5f5f" text-anchor="end">0</text><text x="119.6" y="318.1" font-size="5.55" fill="#5f5f5f" text-anchor="end">-2</text><text transform="translate(107.2,271.5) rotate(-90)" font-size="5.4" fill="#5f5f5f" text-anchor="middle">甲苯</text><text x="279.8" y="335.9" font-size="5.3" fill="#5f5f5f" text-anchor="middle">苯</text><path d="M428.3 334.4 h7 M428.3 336.45 h7 M428.3 338.5 h7" stroke="#555" stroke-width="1.05"/><circle cx="130.4" cy="294.3" r="1.62" fill="#5fa3e8"/><circle cx="174.7" cy="271.2" r="1.62" fill="#5fa3e8"/><circle cx="190.5" cy="268.8" r="1.62" fill="#5fa3e8"/><circle cx="219.8" cy="269.3" r="1.62" fill="#5fa3e8"/><circle cx="218.8" cy="274.5" r="1.62" fill="#5fa3e8"/><circle cx="180.6" cy="277.4" r="1.62" fill="#5fa3e8"/><circle cx="199.2" cy="277.4" r="1.62" fill="#5fa3e8"/><circle cx="181.9" cy="283.4" r="1.62" fill="#5fa3e8"/><circle cx="177.4" cy="285.8" r="1.62" fill="#5fa3e8"/><circle cx="172.5" cy="289.6" r="1.62" fill="#5fa3e8"/><circle cx="175.7" cy="288.1" r="1.62" fill="#5fa3e8"/><circle cx="177.4" cy="290.0" r="1.62" fill="#5fa3e8"/><circle cx="178.9" cy="289.6" r="1.62" fill="#5fa3e8"/><circle cx="183.6" cy="286.8" r="1.62" fill="#5fa3e8"/><circle cx="183.6" cy="288.3" r="1.62" fill="#5fa3e8"/><circle cx="186.3" cy="290.8" r="1.62" fill="#5fa3e8"/><circle cx="188.3" cy="286.1" r="1.62" fill="#5fa3e8"/><circle cx="191.3" cy="286.8" r="1.62" fill="#5fa3e8"/><circle cx="191.3" cy="289.6" r="1.62" fill="#5fa3e8"/><circle cx="200.7" cy="281.9" r="1.62" fill="#5fa3e8"/><circle cx="205.4" cy="283.9" r="1.62" fill="#5fa3e8"/><circle cx="206.4" cy="282.4" r="1.62" fill="#5fa3e8"/><circle cx="206.4" cy="286.3" r="1.62" fill="#5fa3e8"/><circle cx="214.6" cy="286.3" r="1.62" fill="#5fa3e8"/><circle cx="228.4" cy="278.9" r="1.62" fill="#5fa3e8"/><circle cx="229.7" cy="283.1" r="1.62" fill="#5fa3e8"/><circle cx="237.1" cy="277.4" r="1.62" fill="#5fa3e8"/><circle cx="237.1" cy="280.4" r="1.62" fill="#5fa3e8"/><circle cx="258.6" cy="279.7" r="1.62" fill="#5fa3e8"/><circle cx="296.6" cy="263.1" r="1.62" fill="#5fa3e8"/><circle cx="317.6" cy="264.8" r="1.62" fill="#5fa3e8"/><circle cx="350.5" cy="253.7" r="1.62" fill="#5fa3e8"/><circle cx="372.3" cy="240.3" r="1.62" fill="#5fa3e8"/><circle cx="412.9" cy="248.5" r="1.62" fill="#5fa3e8"/><circle cx="421.3" cy="241.3" r="1.62" fill="#5fa3e8"/><circle cx="423.1" cy="230.1" r="1.62" fill="#5fa3e8"/><circle cx="431.2" cy="238.6" r="1.62" fill="#5fa3e8"/><circle cx="432.7" cy="255.9" r="1.62" fill="#5fa3e8"/><path d="M127.2 296.2 L433.5 240.3" stroke="#e4252f" stroke-width="1.3" stroke-dasharray="3.5 2.3" fill="none"/><circle cx="571.5" cy="213.5" r="1.5" fill="#5fa3e8"/><text x="577.5" y="215.5" font-size="5.5" font-weight="bold" fill="#333" textLength="42" lengthAdjust="spacingAndGlyphs">乙苯/间对二甲苯</text><path d="M628.2 213.5 h3.5 M633.9 213.5 h2.1" stroke="#e4252f" stroke-width="1.1"/><text x="637.6" y="215.5" font-size="5.5" font-weight="bold" fill="#333" textLength="22" lengthAdjust="spacingAndGlyphs">线性方程</text><path d="M477.4 226.2 H783.6" stroke="#eeeef2" stroke-width="0.55"/><path d="M477.4 256.5 H783.6" stroke="#eeeef2" stroke-width="0.55"/><path d="M477.4 286.8 H783.6" stroke="#eeeef2" stroke-width="0.55"/><path d="M477.4 226.2 V317.1 H783.6" fill="none" stroke="#ccd5e8" stroke-width="0.6"/><path d="M480.2 317.1 v2.6" stroke="#ccd5e8" stroke-width="0.55"/><path d="M513.6 317.1 v2.6" stroke="#ccd5e8" stroke-width="0.55"/><path d="M547.1 317.1 v2.6" stroke="#ccd5e8" stroke-width="0.55"/><path d="M580.5 317.1 v2.6" stroke="#ccd5e8" stroke-width="0.55"/><path d="M614.0 317.1 v2.6" stroke="#ccd5e8" stroke-width="0.55"/><path d="M647.5 317.1 v2.6" stroke="#ccd5e8" stroke-width="0.55"/><path d="M680.9 317.1 v2.6" stroke="#ccd5e8" stroke-width="0.55"/><path d="M714.4 317.1 v2.6" stroke="#ccd5e8" stroke-width="0.55"/><path d="M747.8 317.1 v2.6" stroke="#ccd5e8" stroke-width="0.55"/><path d="M781.2 317.1 v2.6" stroke="#ccd5e8" stroke-width="0.55"/><text x="480.2" y="325.1" font-size="5.55" fill="#5f5f5f" text-anchor="middle">0</text><text x="513.6" y="325.1" font-size="5.55" fill="#5f5f5f" text-anchor="middle">0.1</text><text x="547.1" y="325.1" font-size="5.55" fill="#5f5f5f" text-anchor="middle">0.2</text><text x="580.5" y="325.1" font-size="5.55" fill="#5f5f5f" text-anchor="middle">0.3</text><text x="614.0" y="325.1" font-size="5.55" fill="#5f5f5f" text-anchor="middle">0.4</text><text x="647.5" y="325.1" font-size="5.55" fill="#5f5f5f" text-anchor="middle">0.5</text><text x="680.9" y="325.1" font-size="5.55" fill="#5f5f5f" text-anchor="middle">0.6</text><text x="714.4" y="325.1" font-size="5.55" fill="#5f5f5f" text-anchor="middle">0.7</text><text x="747.8" y="325.1" font-size="5.55" fill="#5f5f5f" text-anchor="middle">0.8</text><text x="781.2" y="325.1" font-size="5.55" fill="#5f5f5f" text-anchor="middle">0.9</text><text x="471" y="226.7" font-size="5.55" fill="#5f5f5f" text-anchor="end">0.75</text><text x="471" y="257.3" font-size="5.55" fill="#5f5f5f" text-anchor="end">0.5</text><text x="471" y="287.7" font-size="5.55" fill="#5f5f5f" text-anchor="end">0.25</text><text x="471" y="317.9" font-size="5.55" fill="#5f5f5f" text-anchor="end">0</text><text transform="translate(454.2,271.5) rotate(-90)" font-size="5.4" fill="#5f5f5f" text-anchor="middle">乙苯</text><text x="630.4" y="335.9" font-size="5.3" fill="#5f5f5f" text-anchor="middle">间对二甲苯</text><path d="M774.4 334.4 h7 M774.4 336.45 h7 M774.4 338.5 h7" stroke="#555" stroke-width="1.05"/><circle cx="481.9" cy="305.1" r="1.62" fill="#5fa3e8"/><circle cx="481.9" cy="314.8" r="1.62" fill="#5fa3e8"/><circle cx="509.6" cy="306.1" r="1.62" fill="#5fa3e8"/><circle cx="511.1" cy="307.1" r="1.62" fill="#5fa3e8"/><circle cx="515.0" cy="309.6" r="1.62" fill="#5fa3e8"/><circle cx="519.5" cy="301.2" r="1.62" fill="#5fa3e8"/><circle cx="520.2" cy="303.4" r="1.62" fill="#5fa3e8"/><circle cx="522.7" cy="301.7" r="1.62" fill="#5fa3e8"/><circle cx="525.0" cy="303.2" r="1.62" fill="#5fa3e8"/><circle cx="523.7" cy="308.1" r="1.62" fill="#5fa3e8"/><circle cx="529.4" cy="315.5" r="1.62" fill="#5fa3e8"/><circle cx="531.1" cy="305.4" r="1.62" fill="#5fa3e8"/><circle cx="533.1" cy="300.2" r="1.62" fill="#5fa3e8"/><circle cx="534.1" cy="302.2" r="1.62" fill="#5fa3e8"/><circle cx="535.1" cy="297.0" r="1.62" fill="#5fa3e8"/><circle cx="536.8" cy="299.2" r="1.62" fill="#5fa3e8"/><circle cx="538.6" cy="313.6" r="1.62" fill="#5fa3e8"/><circle cx="541.8" cy="299.2" r="1.62" fill="#5fa3e8"/><circle cx="542.0" cy="294.3" r="1.62" fill="#5fa3e8"/><circle cx="546.2" cy="300.9" r="1.62" fill="#5fa3e8"/><circle cx="547.0" cy="298.2" r="1.62" fill="#5fa3e8"/><circle cx="548.7" cy="315.5" r="1.62" fill="#5fa3e8"/><circle cx="552.9" cy="299.7" r="1.62" fill="#5fa3e8"/><circle cx="555.4" cy="294.3" r="1.62" fill="#5fa3e8"/><circle cx="556.6" cy="296.7" r="1.62" fill="#5fa3e8"/><circle cx="563.6" cy="295.7" r="1.62" fill="#5fa3e8"/><circle cx="564.3" cy="292.3" r="1.62" fill="#5fa3e8"/><circle cx="568.8" cy="265.8" r="1.62" fill="#5fa3e8"/><circle cx="575.0" cy="288.6" r="1.62" fill="#5fa3e8"/><circle cx="575.9" cy="283.6" r="1.62" fill="#5fa3e8"/><circle cx="575.9" cy="290.3" r="1.62" fill="#5fa3e8"/><circle cx="581.1" cy="283.9" r="1.62" fill="#5fa3e8"/><circle cx="594.3" cy="282.6" r="1.62" fill="#5fa3e8"/><circle cx="594.3" cy="291.3" r="1.62" fill="#5fa3e8"/><circle cx="596.5" cy="277.9" r="1.62" fill="#5fa3e8"/><circle cx="599.5" cy="285.3" r="1.62" fill="#5fa3e8"/><circle cx="594.8" cy="313.3" r="1.62" fill="#5fa3e8"/><circle cx="610.1" cy="277.4" r="1.62" fill="#5fa3e8"/><circle cx="629.9" cy="314.1" r="1.62" fill="#5fa3e8"/><circle cx="635.7" cy="273.5" r="1.62" fill="#5fa3e8"/><circle cx="637.4" cy="269.3" r="1.62" fill="#5fa3e8"/><circle cx="644.4" cy="272.7" r="1.62" fill="#5fa3e8"/><circle cx="659.0" cy="275.9" r="1.62" fill="#5fa3e8"/><circle cx="664.2" cy="268.3" r="1.62" fill="#5fa3e8"/><circle cx="667.6" cy="267.3" r="1.62" fill="#5fa3e8"/><circle cx="672.3" cy="259.9" r="1.62" fill="#5fa3e8"/><circle cx="704.5" cy="254.2" r="1.62" fill="#5fa3e8"/><circle cx="719.6" cy="249.7" r="1.62" fill="#5fa3e8"/><circle cx="731.7" cy="247.5" r="1.62" fill="#5fa3e8"/><circle cx="763.2" cy="308.1" r="1.62" fill="#5fa3e8"/><circle cx="765.6" cy="309.4" r="1.62" fill="#5fa3e8"/><circle cx="769.9" cy="306.1" r="1.62" fill="#5fa3e8"/><circle cx="779.3" cy="237.3" r="1.62" fill="#5fa3e8"/><path d="M481.9 307.1 L780.2 263.1" stroke="#e4252f" stroke-width="1.3" stroke-dasharray="3.5 2.3" fill="none"/><circle cx="233.4" cy="357.5" r="1.5" fill="#5fa3e8"/><text x="239.4" y="359.5" font-size="5.5" font-weight="bold" fill="#333" textLength="24.6" lengthAdjust="spacingAndGlyphs">乙烷/乙炔</text><path d="M272.7 357.5 h3.5 M278.4 357.5 h2.1" stroke="#e4252f" stroke-width="1.1"/><text x="282.1" y="359.5" font-size="5.5" font-weight="bold" fill="#333" textLength="22" lengthAdjust="spacingAndGlyphs">线性方程</text><path d="M125 370.4 H436" stroke="#eeeef2" stroke-width="0.55"/><path d="M125 370.4 V389.2" fill="none" stroke="#ccd5e8" stroke-width="0.6"/><text x="119.2" y="370.7" font-size="5.55" fill="#5f5f5f" text-anchor="end">50</text><circle cx="245.0" cy="384.0" r="1.62" fill="#5fa3e8"/></svg>
<div class="a" style="left:185.2px;top:777.2px;width:1416.0px;height:3.2px;background:#bcd2ee"></div>
<div class="a" style="left:0;top:779.2px;width:1600px;height:4.4px;background:#e6eefa"></div>
<div class="a" style="left:1577.2px;top:116.0px;width:22.8px;height:662.0px;background:#fff"></div>
<div class="a" style="left:1591.6px;top:116.0px;width:8.4px;height:504.8px;background:linear-gradient(90deg,#c3c1c8 0,#c3c1c8 70%,#d9e0ea 100%)"></div>
<div class="a" style="left:1592.8px;top:620.8px;width:7.2px;height:158.0px;background:#e9eff7"></div>
<div id="ft" class="a">
<svg class="a" style="left:1510.4px;top:5.8px" width="15.2" height="13.2" viewBox="0 0 15.2 13.2"><path d="M1 3.4 L3.4 3.4 L3.4 0.8 L6 0.8 L6 3.4 L9.2 3.4 L9.2 0.8 L11.8 0.8 L11.8 3.4 L14.2 3.4 L14.2 12.6 L1 12.6 Z" fill="#fff"/><rect x="6.4" y="6" width="1.6" height="3.6" fill="#c0504a"/><rect x="9.4" y="6" width="1.4" height="2" fill="#8899b8"/></svg>
<svg class="a" style="left:1542.0px;top:5.8px" width="16.8" height="13.6" viewBox="0 0 16.8 13.6"><path d="M0.6 0.8 H11.4 V7.8 H5 L2.4 10.2 V7.8 H0.6 Z" fill="#fff"/><path d="M5.6 4.6 H16 V11 H14.2 V13.4 L11.4 11 H5.6 Z" fill="#e8ecf3" stroke="#485a7b" stroke-width="0.9"/><rect x="3" y="2.8" width="6" height="1.4" fill="#d7c27a"/></svg>
<svg class="a" style="left:1574.8px;top:6.2px" width="17.6" height="12.4" viewBox="0 0 17.6 12.4"><rect x="0.5" y="0.5" width="16.6" height="11.4" rx="1.4" fill="#fff"/><path d="M2.4 2.6 L8.8 8 L15.2 2.6" fill="none" stroke="#7888a6" stroke-width="1.5"/></svg>
</div>
</div></body></html>
